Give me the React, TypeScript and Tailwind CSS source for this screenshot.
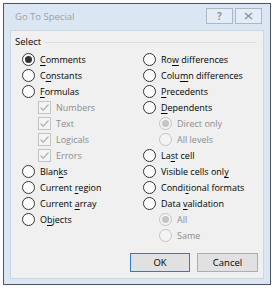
import React from 'react'

const font = { fontFamily: '"Open Sans", "Noto Sans", sans-serif' }

type Item = {
  label: React.ReactNode
  kind: 'radio' | 'check' | 'subradio'
  checked?: boolean
  disabled?: boolean
}

// access-key underline
function U({ children }: { children: React.ReactNode }) {
  return <span className="underline underline-offset-[2px] decoration-[1px]">{children}</span>
}

function Radio({ checked, disabled }: { checked?: boolean; disabled?: boolean }) {
  return (
    <span
      className={`flex h-[13px] w-[13px] shrink-0 items-center justify-center rounded-full border ${
        disabled ? 'border-[#c4c4c4] bg-[#f4f4f4]' : 'border-[#333333] bg-white'
      }`}
    >
      {checked && (
        <span
          className={`h-[7px] w-[7px] rounded-full ${disabled ? 'bg-[#c4c4c4]' : 'bg-[#333333]'}`}
        />
      )}
    </span>
  )
}

function Check() {
  return (
    <span className="flex h-[13px] w-[13px] shrink-0 items-center justify-center border border-[#c4c4c4] bg-[#f4f4f4]">
      <svg width="11" height="11" viewBox="0 0 11 11">
        <path d="M1.5 5.5 L4.2 8.2 L9.5 2.5" fill="none" stroke="#b5b5b5" strokeWidth="1.3" />
      </svg>
    </span>
  )
}

function Row({ item }: { item: Item }) {
  const sub = item.kind !== 'radio'
  return (
    <div className={`flex h-[16px] items-center ${sub ? 'ml-[16px]' : ''}`}>
      {item.kind === 'check' ? <Check /> : <Radio checked={item.checked} disabled={item.disabled} />}
      <span
        className={`ml-[5px] whitespace-nowrap text-[9px] leading-none ${
          item.disabled ? 'text-[#8c8c8c]' : 'text-black'
        }`}
      >
        {item.label}
      </span>
    </div>
  )
}

const left: Item[] = [
  { label: <><U>C</U>omments</>, kind: 'radio', checked: true },
  { label: <>C<U>o</U>nstants</>, kind: 'radio' },
  { label: <><U>F</U>ormulas</>, kind: 'radio' },
  { label: 'Numbers', kind: 'check', disabled: true },
  { label: 'Text', kind: 'check', disabled: true },
  { label: 'Logicals', kind: 'check', disabled: true },
  { label: 'Errors', kind: 'check', disabled: true },
  { label: <>Blan<U>k</U>s</>, kind: 'radio' },
  { label: <>Current <U>r</U>egion</>, kind: 'radio' },
  { label: <>Current <U>a</U>rray</>, kind: 'radio' },
  { label: <>O<U>b</U>jects</>, kind: 'radio' },
]

const right: Item[] = [
  { label: <>Ro<U>w</U> differences</>, kind: 'radio' },
  { label: <>Colu<U>m</U>n differences</>, kind: 'radio' },
  { label: <><U>P</U>recedents</>, kind: 'radio' },
  { label: <><U>D</U>ependents</>, kind: 'radio' },
  { label: 'Direct only', kind: 'subradio', checked: true, disabled: true },
  { label: 'All levels', kind: 'subradio', disabled: true },
  { label: <>La<U>s</U>t cell</>, kind: 'radio' },
  { label: <>Visible cells onl<U>y</U></>, kind: 'radio' },
  { label: <>Condi<U>t</U>ional formats</>, kind: 'radio' },
  { label: <>Data <U>v</U>alidation</>, kind: 'radio' },
  { label: 'All', kind: 'subradio', checked: true, disabled: true },
  { label: 'Same', kind: 'subradio', disabled: true },
]

export default function App() {
  return (
    <div className="h-[291px] w-[276px] bg-white p-[3px]" style={font}>
      <div className="flex h-[282px] w-[268px] flex-col border border-[#4d5560] bg-[#dae6f2]">
        {/* title bar */}
        <div className="flex h-[26px] items-center pl-[11px] pr-[8px]">
          <span className="flex-1 text-[9.5px] text-[#9aa3ad]">Go To Special</span>
          <div className="mt-[-2px] flex gap-[2px]">
            <div className="flex h-[16px] w-[27px] items-center justify-center border border-[#a9b7c6] bg-[#e4edf6] text-[10px] font-bold text-[#8a96a4]">
              ?
            </div>
            <div className="flex h-[16px] w-[27px] items-center justify-center border border-[#a9b7c6] bg-[#e4edf6]">
              <svg width="9" height="8" viewBox="0 0 9 8">
                <path d="M1 1 L8 7 M8 1 L1 7" stroke="#8a96a4" strokeWidth="1.5" />
              </svg>
            </div>
          </div>
        </div>

        {/* client area */}
        <div className="mx-[6px] mb-[5px] flex flex-1 flex-col border border-[#c9d8e8] bg-[#f0f0f0]">
          <div className="mt-[4px] flex items-center pl-[4px] pr-[6px]">
            <span className="text-[9.5px] text-black">Select</span>
            <div className="ml-[3px] h-px flex-1 bg-[#dcdcdc]" />
          </div>
          <div className="mt-[2px] flex">
            <div className="ml-[11px] w-[121px]">
              {left.map((it, i) => (
                <Row key={i} item={it} />
              ))}
            </div>
            <div>
              {right.map((it, i) => (
                <Row key={i} item={it} />
              ))}
            </div>
          </div>
          <div className="mt-[10px] flex justify-end gap-[7px] pr-[5px]">
            <button className="h-[19px] w-[60px] border border-[#2f7ccb] bg-[#e1e1e1] text-[9.5px] text-black">
              OK
            </button>
            <button className="h-[19px] w-[61px] border border-[#adadad] bg-[#e1e1e1] text-[9.5px] text-black">
              Cancel
            </button>
          </div>
        </div>
      </div>
    </div>
  )
}
